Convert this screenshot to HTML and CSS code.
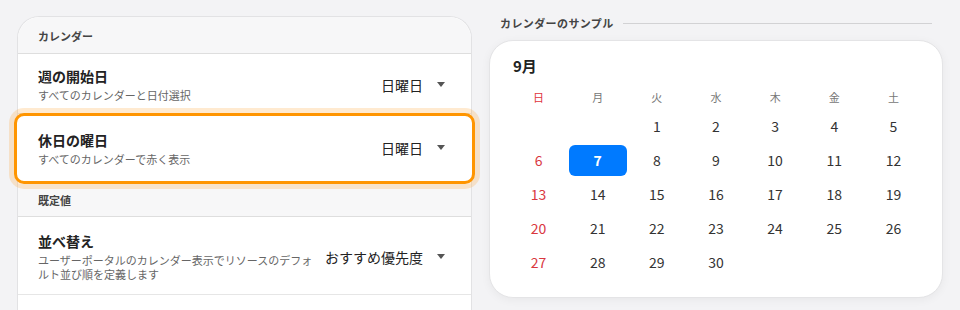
FILE: index.html
```html
<!doctype html>
<html>
<head>
	<meta charset=utf-8>
	<link rel="stylesheet" href="styles.css">
</head>
<body>

<div class=page>

	<div class=settings>
		<div class=section>カレンダー</div>

		<div class=row>
			<div class=text>
				<div class=title>週の開始日</div>
				<div class=sub>すべてのカレンダーと日付選択</div>
			</div>
			<div class=value>日曜日<span class=caret></span></div>
		</div>

		<div class="row focus">
			<div class=text>
				<div class=title>休日の曜日</div>
				<div class=sub>すべてのカレンダーで赤く表示</div>
			</div>
			<div class=value>日曜日<span class=caret></span></div>
		</div>

		<div class=section>既定値</div>

		<div class="row tall">
			<div class=text>
				<div class=title>並べ替え</div>
				<div class=sub>ユーザーポータルのカレンダー表示でリソースのデフォルト並び順を定義します</div>
			</div>
			<div class=value>おすすめ優先度<span class=caret></span></div>
		</div>
	</div>

	<div class=preview>
		<div class=label><span>カレンダーのサンプル</span><div class=rule></div></div>

		<div class=calendar>
			<div class=month>9月</div>
			<div class=grid id=grid>
				<div class="wd sun">日</div>
				<div class=wd>月</div>
				<div class=wd>火</div>
				<div class=wd>水</div>
				<div class=wd>木</div>
				<div class=wd>金</div>
				<div class=wd>土</div>
			</div>
		</div>
	</div>

</div>

<script>
	var grid = document.getElementById("grid");
	var first = 2; // 1st falls on Tuesday
	for (var i = 0; i < first + 30; i++) {
		var d = document.createElement("div");
		var n = i - first + 1;
		d.className = "day";
		if (n > 0) {
			d.innerHTML = "<span>" + n + "</span>";
			if (i % 7 == 0) d.className += " sun";
			if (n == 7) d.className += " today";
		}
		grid.appendChild(d);
	}
</script>

</body>
</html>
```

FILE: styles.css
```css
html, body { margin: 0; padding: 0; height: 100%; overflow: hidden; }
body { background: #f3f3f5; font-family: "Noto Sans CJK JP", "Noto Sans", sans-serif; color: #222; }
* { box-sizing: border-box; }

.page { display: flex; gap: 17px; padding: 16px 17px 0; }

.settings { width: 455px; height: 294px; background: #fff; border: 1px solid #e2e2e4; border-bottom: 0; border-radius: 22px 22px 0 0; }
.section { background: #f7f7f8; font-size: 11px; font-weight: bold; color: #444; padding: 0 20px; height: 37px; line-height: 38px; border-bottom: 1px solid #dedede; border-radius: 22px 22px 0 0; }
.row { display: flex; align-items: center; padding: 0 26px 0 20px; height: 60px; border-bottom: 1px solid #e6e6e6; background: #fff; }
.row.focus { position: relative; margin: -1px -4px 0; padding: 0 27px 2px 21px; height: 71px; border: 3px solid #ff9500; border-radius: 10px; box-shadow: 0 0 0 5px rgba(255, 160, 40, 0.22); }
.row.focus .value { padding-top: 0; }
.row.focus + .section { border-radius: 0; height: 33px; line-height: 33px; }
.row.tall { height: 78px; }
.text { flex: 1; min-width: 0; padding-right: 12px; }
.title { font-size: 14px; font-weight: bold; line-height: 20px; color: #222; }
.sub { font-size: 11px; line-height: 14px; color: #666; margin-top: 2px; max-width: 278px; }
.value { display: flex; align-items: center; font-size: 14px; color: #222; white-space: nowrap; padding-top: 2px; }
.caret { display: inline-block; margin-left: 14px; width: 0; height: 0; border-left: 4px solid transparent; border-right: 4px solid transparent; border-top: 5px solid #555; }

.preview { width: 454px; }
.label { display: flex; align-items: center; padding: 0 11px; height: 14px; margin-bottom: 10px; font-size: 11px; font-weight: bold; color: #444; letter-spacing: 0.4px; }
.rule { flex: 1; height: 1px; background: #d2d2d4; margin-left: 9px; }

.calendar { background: #fff; border: 1px solid #e4e4e6; border-radius: 24px; box-shadow: 0 2px 10px rgba(0, 0, 0, 0.05); padding: 15px 19px 18px; }
.month { font-size: 15px; font-weight: bold; line-height: 20px; padding-left: 4px; margin-bottom: 9px; color: #222; }
.grid { display: grid; grid-template-columns: repeat(7, 1fr); grid-template-rows: 24px; grid-auto-rows: 34px; }
.wd { font-size: 11px; color: #777; text-align: center; line-height: 24px; }
.wd.sun { color: #e0333a; }
.day { display: flex; align-items: center; justify-content: center; font-size: 14px; color: #333; }
.day span { display: flex; align-items: center; justify-content: center; width: 58px; height: 31px; border-radius: 6px; }
.day.sun { color: #d9373f; }
.day.today span { background: #007aff; color: #fff; font-weight: bold; }
```
